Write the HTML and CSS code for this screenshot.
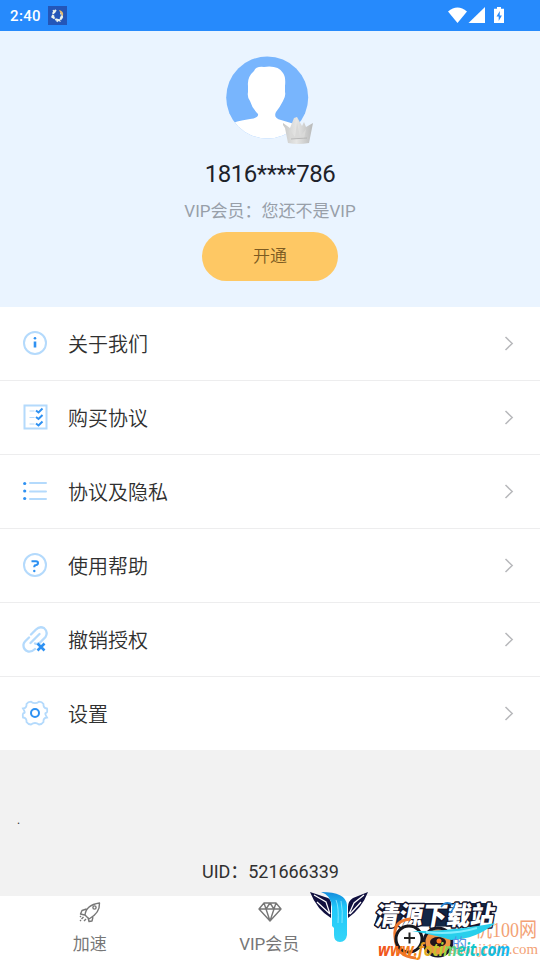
FILE: index.html
```html
<!DOCTYPE html>
<html lang="zh-CN">
<head>
<meta charset="utf-8">
<title>我的</title>
<link rel="stylesheet" href="styles.css">
</head>
<body>
<div class="screen">
  <header class="status">
    <span class="time">2:40</span>
    <svg class="app-badge" width="19" height="19" viewBox="0 0 19 19"><rect width="19" height="19" fill="#2356b8"/><path d="M8 4L5.500 6.500 4.500 11 8 13.500l4 1 2-4-1-4" fill="none" stroke="#edf5ef" stroke-width="2" stroke-dasharray="5 .8"/><path d="M5 4l2 3M3.500 11l3-1M9 16l1-3M15 12l-3-1" stroke="#edf5ef" stroke-width="1.300"/><path d="M11 4q5 1 4 6l-2-2z" fill="#e7bd70"/></svg>
    <svg class="signals" width="60" height="20" viewBox="0 0 60 20"><g fill="#fff"><path d="M0 5.4Q9.500-2.600 19 5.400L9.500 17Z"/><path d="M37 1v16H20.500z"/><path d="M49 1h4v1.700h3V17H46V2.700h3z"/></g><path d="M51.800 5L48.500 10.500h2.200V15l3.200-5.600h-2.200z" fill="#268afc"/></svg>
  </header>
  <section class="profile">
    <svg class="avatar" width="90" height="90" viewBox="0 0 90 90">
      <defs><clipPath id="disc"><circle cx="42.200" cy="41.500" r="41"/></clipPath><linearGradient id="silver"><stop stop-color="#c8c9c8"/><stop offset=".45" stop-color="#e6e6e5"/><stop offset="1" stop-color="#b8b9b9"/></linearGradient></defs>
      <g clip-path="url(#disc)"><rect width="90" height="90" fill="#78b5fd"/><path d="M29 15Q31 10 39 11Q53 9 58 17Q61 21 60 30V36Q61 40 58 45Q55 51 51 56Q48 62 56 64L76 70V90H4V69Q10 65 25 63Q34 62 33 58Q27 52 25 45Q22 41 23 36V30Q22 21 29 15Z" fill="#fff"/></g>
      <path d="M58 67l7 5 4-10 3-1 5 9 2-4 2 5 7-4-4 20q-11 2-21 0l-3-15-2-3z" fill="url(#silver)"/><path d="M64 73l6 8 2-15 3 15 6-8-2 10H66z" fill="#d9d9d8"/><path d="M66 83l16-1" stroke="#b0b0b0" stroke-width=".8"/>
    </svg>
    <h1 class="phone">1816****786</h1>
    <p class="vip">VIP会员：您还不是VIP</p>
    <button class="open">开通</button>
  </section>
  <nav class="menu">
    <a class="row"><svg class="icon" viewBox="0 0 28 28"><circle cx="14" cy="14" r="11" class="pale"/><path d="M14 12.500v6" class="blue bold"/><circle cx="14" cy="9.200" r="1.300" class="dot"/></svg><span>关于我们</span><svg class="arrow" viewBox="0 0 10 16"><path d="M1.500 2L8.200 8.500 1.500 15"/></svg></a>
    <a class="row"><svg class="icon" viewBox="0 0 28 28"><path d="M3.500 2.500h22v23h-22z" class="pale"/><path d="M8.500 8h5M8.500 14.500h5M8.500 21h5" class="pale thin"/><path d="M15 7.500l2.500 2 4-4M15 14l2.500 2 4-4M15 20.500l2.500 2 4-4" class="blue"/></svg><span>购买协议</span><svg class="arrow" viewBox="0 0 10 16"><path d="M1.500 2L8.200 8.500 1.500 15"/></svg></a>
    <a class="row"><svg class="icon" viewBox="0 0 28 28"><path d="M9 6h16M9 14.500h16M9 22h16" class="pale round"/><circle cx="3.700" cy="6.500" r="1.600" class="dot"/><circle cx="3.700" cy="14" r="1.600" class="dot"/><circle cx="3.700" cy="21.500" r="1.600" class="dot"/></svg><span>协议及隐私</span><svg class="arrow" viewBox="0 0 10 16"><path d="M1.500 2L8.200 8.500 1.500 15"/></svg></a>
    <a class="row"><svg class="icon" viewBox="0 0 28 28"><circle cx="14" cy="14" r="11" class="pale"/><path d="M10.500 10.200h4.500q2 0 2 1.700t-2 2q-1.800.2-1.800 2.400" class="blue"/><circle cx="13.300" cy="20" r="1.200" class="dot"/></svg><span>使用帮助</span><svg class="arrow" viewBox="0 0 10 16"><path d="M1.500 2L8.200 8.500 1.500 15"/></svg></a>
    <a class="row"><svg class="icon" viewBox="0 0 28 28"><path d="M10 9.500l5-5Q18.500 1 23 3q4.500 4 1.500 9l-6 6q-2.500 1.500-4.500.5M18.500 9l-9 9M14 24q-3 3-7 2.500-5-2-4.500-7 .2-1.500 1.500-3l4-4" class="pale link"/><path d="M16.500 18.500l7 7M23.500 18.500l-7 7" class="blue bold"/></svg><span>撤销授权</span><svg class="arrow" viewBox="0 0 10 16"><path d="M1.500 2L8.200 8.500 1.500 15"/></svg></a>
    <a class="row"><svg class="icon" viewBox="0 0 28 28"><path d="M10 2.700q4 3 8 0 3 0 4.500 2.300-.5 4 3.500 4.500.8 4.500-1 4.500t1 4.500q-4 .5-3.500 4.500-1.500 2.300-4.500 2.500-4-3-8 0-3-.2-4.500-2.500.5-4-3.500-4.500-.8-4.500 1-4.500T2 9.500Q6 9 5.500 5 7 2.700 10 2.700z" class="pale thin-gear"/><circle cx="14" cy="14" r="4" class="blue"/></svg><span>设置</span><svg class="arrow" viewBox="0 0 10 16"><path d="M1.500 2L8.200 8.500 1.500 15"/></svg></a>
  </nav>
  <section class="account"><span class="period">.</span><p>UID：521666339</p></section>
  <footer class="tabs">
    <a class="tab"><svg width="24" height="22" viewBox="0 0 24 22"><path d="M7 14Q8 4 21.500 2 22 12 11 18zM8.500 8L4 9.500 2.500 13l4.200 1M15 16l-1 4-3 .5-1-4M5.500 16l-2 2M8 18l-2 2M3 15l-1 1M2 20l1-1"/><circle cx="16.500" cy="6.500" r="1.600"/></svg><span>加速</span></a>
    <a class="tab"><svg width="24" height="22" viewBox="0 0 24 22"><path d="M6 2h12l5 6-11 12L1 8zM1 8h22M6 2l2 6 4 12 4-12 2-6M8 8l4-6 4 6"/></svg><span>VIP会员</span></a>
    <a class="tab"></a>
  </footer>
  <svg class="watermark" width="240" height="80" viewBox="300 880 240 80">
    <defs><linearGradient id="cyan" x1="0" y1="0" x2="0" y2="1"><stop stop-color="#148bdc"/><stop offset=".3" stop-color="#20c8fa"/><stop offset="1" stop-color="#35d5f8"/></linearGradient><linearGradient id="rainbow"><stop stop-color="#ef4b1d"/><stop offset=".3" stop-color="#f58a19"/><stop offset=".48" stop-color="#b3d832"/><stop offset=".65" stop-color="#12c9bf"/><stop offset="1" stop-color="#16b6f5"/></linearGradient></defs>
    <g fill="#11103f"><path d="M310 892l18 6q4 2 3 9v11q-14-8-21-26zM368 892l-15 6q-5 3-5 9v11q14-10 20-26z"/></g>
    <path d="M314 895l12 7 4 12M317 902l13 12M364 895l-10 8-5 11M361 902l-11 12" stroke="#fff" stroke-width="1.200" fill="none"/>
    <path d="M321 892q25 0 26 13v30q-1 7-7 7t-6-7v-7l-2-2v-19q-1-12-11-15z" fill="url(#cyan)"/><path d="M336 900q3 7 2 23M341 901q2 10 1 22" stroke="#a9efff" stroke-width=".7" fill="none"/>
    <text class="mark-side" x="456" y="937" textLength="81" lengthAdjust="spacingAndGlyphs">手机100网</text>
    <text class="mark-domain" x="450" y="954" textLength="88" lengthAdjust="spacingAndGlyphs">shouji100.com</text>
    <path d="M374 926l7-23h112l-3 24z" fill="#122747"/>
    <text class="mark-title" x="0" y="0" textLength="119" lengthAdjust="spacingAndGlyphs" transform="translate(374 925) skewX(-10)">清源下载站</text>
    <path d="M411 919q-18 1-16 18 1 20 21 21" fill="none" stroke="#f0782c" stroke-width="3"/>
    <circle cx="409" cy="939" r="13" fill="#fff" stroke="#17171d" stroke-width="3"/><path d="M404 938h11M409.500 932.500v11" stroke="#222" stroke-width="2"/>
    <circle cx="438" cy="942" r="14" fill="#f09345" stroke="#171725" stroke-width="3"/><ellipse cx="438" cy="942" rx="8" ry="5" fill="#20151b"/><circle cx="439" cy="941" r="2.500" fill="#ff7b24"/>
    <path d="M412 931q34 1 83-8-18 16-44 17-16-5-39-9z" fill="#28cfec"/><path d="M426 932q27 3 51-4" stroke="#80edff" stroke-width="2" fill="none"/>
    <path d="M441 907q5-7 12-2m-3 8q5-6 5-10" fill="none" stroke="#2385d7" stroke-width="1.500"/>
    <text class="mark-blue" x="452" y="949">的</text>
    <text class="mark-url" x="378" y="956" textLength="132" lengthAdjust="spacingAndGlyphs">www.fotimeit.com</text>
  </svg>
</div>
</body>
</html>
```
FILE: styles.css
```css
* { box-sizing: border-box; }
body { margin: 0; font-family: Roboto, "Noto Sans CJK SC", sans-serif; }
.screen { position: relative; width: 540px; height: 960px; display: flex; flex-direction: column; overflow: hidden; background: #f2f2f2; }
.status { height: 31px; background: #268afc; color: #fff; display: flex; align-items: center; padding: 0 32px 0 10px; }
.time { font-size: 15px; font-weight: 500; letter-spacing: .35px; }
.app-badge { margin-left: 7px; }
.signals { margin-left: auto; }
.profile { height: 276px; background: #eaf4ff; display: flex; flex-direction: column; align-items: center; padding-top: 25px; }
.avatar { margin-right: 1px; }
.phone { margin: 12px 0 0; font-size: 24px; line-height: 32px; font-weight: 400; letter-spacing: -.5px; color: #1d222a; }
.vip { margin: 8px 0 0; font-size: 17px; line-height: 26px; color: #989fa9; font-weight: 400; }
.open { width: 136px; height: 49px; margin-top: 8px; border: 0; border-radius: 25px; background: #fec864; color: #7c5b22; font: 350 17px/49px Roboto, "Noto Sans CJK SC", sans-serif; padding: 0; }
.menu { height: 443px; background: #fff; }
.row { height: 74px; display: flex; align-items: center; border-bottom: 1px solid #ededee; padding: 0 26px 2px 21px; color: #303030; font-size: 20px; font-weight: 350; }
.row span { padding-top: 1px; }
.row:last-child { height: 73px; border: 0; padding-bottom: 1px; }
.icon { width: 28px; height: 28px; margin-right: 19px; fill: none; }
.arrow { width: 10px; height: 16px; margin-left: auto; fill: none; stroke: #b8b9bc; stroke-width: 1.5; }
.pale { stroke: #b4dafc; stroke-width: 2; }
.thin { stroke-width: 1.2; }
.thin-gear { stroke-width: 1.8; }
.round { stroke-linecap: round; }
.link { stroke-width: 2.3; stroke-linecap: round; }
.blue { stroke: #2e91f2; stroke-width: 2; }
.bold { stroke-width: 2.6; }
.dot { fill: #2e91f2; }
.account { height: 146px; display: flex; flex-direction: column; padding-top: 61px; color: #303030; }
.period { margin-left: 17px; font-size: 12px; line-height: 18px; }
.account p { margin: 29px 0 0 1px; text-align: center; font-size: 18px; line-height: 28px; letter-spacing: -.05px; }
.tabs { height: 64px; display: flex; background: #fff; padding-top: 5px; }
.tab { width: 179.5px; display: flex; flex-direction: column; align-items: center; color: #777; font-size: 17px; font-weight: 400; }
.tab svg { fill: none; stroke: #777; stroke-width: 1.4; stroke-linejoin: round; margin-left: 1px; }
.tab span { margin-top: 8px; line-height: 26px; }
.watermark { position: absolute; left: 300px; top: 880px; }
.mark-title { font: 900 26px "Noto Sans CJK SC", sans-serif; fill: #fff; stroke: #13142c; stroke-width: 3px; paint-order: stroke; stroke-linejoin: round; }
.mark-side { font: 20px "Liberation Serif", "Noto Sans CJK SC", serif; fill: #f3a276; }
.mark-domain { font: 15px "Liberation Serif", serif; fill: #f3a276; }
.mark-blue { font: 15px "Noto Sans CJK SC", sans-serif; fill: #5790e5; }
.mark-url { font: italic bold 17px "Open Sans", sans-serif; fill: url(#rainbow); }
```
